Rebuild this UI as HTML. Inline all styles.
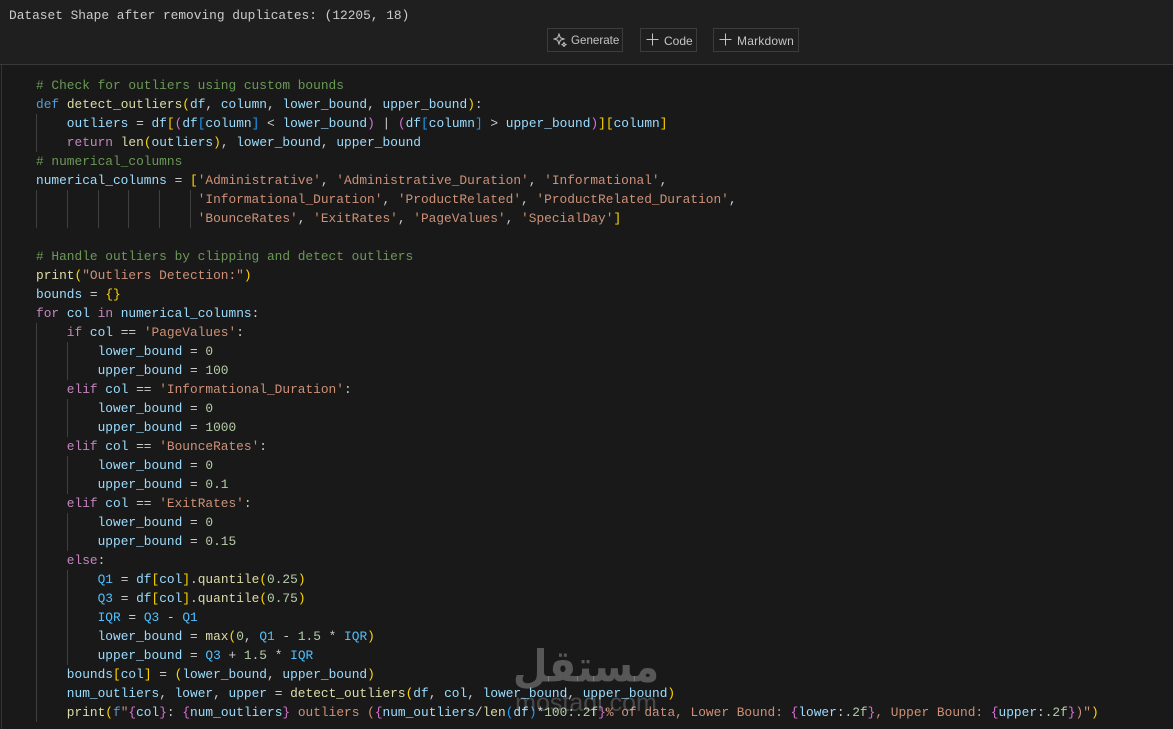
<!DOCTYPE html>
<html><head><meta charset="utf-8"><style>
html,body{margin:0;padding:0;background:#191919;width:1173px;height:729px;overflow:hidden}
#top{position:absolute;left:0;top:0;width:1173px;height:64px;background:#1f1f1f;border-bottom:1px solid #383838}
#lb{position:absolute;left:1px;top:65px;width:1px;height:664px;background:#333}
#out{position:absolute;left:9px;top:6px;font:12.83px/19px "Liberation Mono",monospace;color:#ccc;white-space:pre}
.btn{position:absolute;top:28px;height:22px;border:1px solid #3c3c3c;font:12px/24px "Liberation Sans",sans-serif;color:#c4c4c4;box-sizing:content-box}
.btn span{position:absolute;top:0;white-space:nowrap}
.btn svg{position:absolute;left:5px;top:4px}
pre{position:absolute;left:36px;top:76px;margin:0;font:12.83px/19px "Liberation Mono",monospace;color:#ccc}
.k{color:#569cd6}.c{color:#c586c0}.f{color:#dcdcaa}.v{color:#9cdcfe}.s{color:#ce9178}.n{color:#b5cea8}.m{color:#6a9955}.y{color:#ffd700}.p{color:#da70d6}.b{color:#179fff}.q{color:#4fc1ff}
.g{position:absolute;width:1px;background:#404040}
#wa{position:absolute;left:486px;top:642px;width:200px;text-align:center;font:bold 40px/50px "DejaVu Sans",sans-serif;color:rgba(255,255,255,.27);white-space:nowrap;transform:scaleY(1.1)}
#wb{position:absolute;left:486px;top:689px;width:200px;text-align:center;font:25px/28px "Liberation Sans",sans-serif;color:rgba(255,255,255,.2)}
</style></head><body>
<div id="top"></div><div id="lb"></div>
<div id="out">Dataset Shape after removing duplicates: (12205, 18)</div>
<div class="btn" style="left:547px;width:74px"><svg width="14" height="14" viewBox="0 0 14 14" fill="none" stroke="#c4c4c4" stroke-width="1"><path d="M6 1 L7.3 4.7 L11 6 L7.3 7.3 L6 11 L4.7 7.3 L1 6 L4.7 4.7 Z"/><path d="M11 9.5 L11.8 11 L13 11.6 L11.8 12.3 L11 13.5 L10.2 12.3 L9 11.6 L10.2 11 Z"/></svg><span style="left:23px;font-size:11.6px">Generate</span></div>
<div class="btn" style="left:640px;width:55px"><svg width="13" height="13" viewBox="0 0 13 13" stroke="#c4c4c4" stroke-width="1"><path d="M6.5 0.5V12.5M0.5 6.5H12.5"/></svg><span style="left:23px">Code</span></div>
<div class="btn" style="left:713px;width:84px"><svg width="13" height="13" viewBox="0 0 13 13" stroke="#c4c4c4" stroke-width="1"><path d="M6.5 0.5V12.5M0.5 6.5H12.5"/></svg><span style="left:23px;letter-spacing:.2px">Markdown</span></div>
<div class="g" style="left:36px;top:114px;height:38px"></div>
<div class="g" style="left:36px;top:190px;height:38px"></div><div class="g" style="left:67px;top:190px;height:38px"></div><div class="g" style="left:98px;top:190px;height:38px"></div><div class="g" style="left:128px;top:190px;height:38px"></div><div class="g" style="left:159px;top:190px;height:38px"></div><div class="g" style="left:190px;top:190px;height:38px"></div>
<div class="g" style="left:36px;top:323px;height:399px"></div>
<div class="g" style="left:67px;top:342px;height:38px"></div><div class="g" style="left:67px;top:399px;height:38px"></div><div class="g" style="left:67px;top:456px;height:38px"></div><div class="g" style="left:67px;top:513px;height:38px"></div><div class="g" style="left:67px;top:570px;height:95px"></div>
<pre><span class="m"># Check for outliers using custom bounds</span>
<span class="k">def</span> <span class="f">detect_outliers</span><span class="y">(</span><span class="v">df</span>, <span class="v">column</span>, <span class="v">lower_bound</span>, <span class="v">upper_bound</span><span class="y">)</span>:
    <span class="v">outliers</span> = <span class="v">df</span><span class="y">[</span><span class="p">(</span><span class="v">df</span><span class="b">[</span><span class="v">column</span><span class="b">]</span> &lt; <span class="v">lower_bound</span><span class="p">)</span> | <span class="p">(</span><span class="v">df</span><span class="b">[</span><span class="v">column</span><span class="b">]</span> &gt; <span class="v">upper_bound</span><span class="p">)</span><span class="y">]</span><span class="y">[</span><span class="v">column</span><span class="y">]</span>
    <span class="c">return</span> <span class="f">len</span><span class="y">(</span><span class="v">outliers</span><span class="y">)</span>, <span class="v">lower_bound</span>, <span class="v">upper_bound</span>
<span class="m"># numerical_columns</span>
<span class="v">numerical_columns</span> = <span class="y">[</span><span class="s">'Administrative'</span>, <span class="s">'Administrative_Duration'</span>, <span class="s">'Informational'</span>,
                     <span class="s">'Informational_Duration'</span>, <span class="s">'ProductRelated'</span>, <span class="s">'ProductRelated_Duration'</span>,
                     <span class="s">'BounceRates'</span>, <span class="s">'ExitRates'</span>, <span class="s">'PageValues'</span>, <span class="s">'SpecialDay'</span><span class="y">]</span>

<span class="m"># Handle outliers by clipping and detect outliers</span>
<span class="f">print</span><span class="y">(</span><span class="s">"Outliers Detection:"</span><span class="y">)</span>
<span class="v">bounds</span> = <span class="y">{}</span>
<span class="c">for</span> <span class="v">col</span> <span class="c">in</span> <span class="v">numerical_columns</span>:
    <span class="c">if</span> <span class="v">col</span> == <span class="s">'PageValues'</span>:
        <span class="v">lower_bound</span> = <span class="n">0</span>
        <span class="v">upper_bound</span> = <span class="n">100</span>
    <span class="c">elif</span> <span class="v">col</span> == <span class="s">'Informational_Duration'</span>:
        <span class="v">lower_bound</span> = <span class="n">0</span>
        <span class="v">upper_bound</span> = <span class="n">1000</span>
    <span class="c">elif</span> <span class="v">col</span> == <span class="s">'BounceRates'</span>:
        <span class="v">lower_bound</span> = <span class="n">0</span>
        <span class="v">upper_bound</span> = <span class="n">0.1</span>
    <span class="c">elif</span> <span class="v">col</span> == <span class="s">'ExitRates'</span>:
        <span class="v">lower_bound</span> = <span class="n">0</span>
        <span class="v">upper_bound</span> = <span class="n">0.15</span>
    <span class="c">else</span>:
        <span class="q">Q1</span> = <span class="v">df</span><span class="y">[</span><span class="v">col</span><span class="y">]</span>.<span class="f">quantile</span><span class="y">(</span><span class="n">0.25</span><span class="y">)</span>
        <span class="q">Q3</span> = <span class="v">df</span><span class="y">[</span><span class="v">col</span><span class="y">]</span>.<span class="f">quantile</span><span class="y">(</span><span class="n">0.75</span><span class="y">)</span>
        <span class="q">IQR</span> = <span class="q">Q3</span> - <span class="q">Q1</span>
        <span class="v">lower_bound</span> = <span class="f">max</span><span class="y">(</span><span class="n">0</span>, <span class="q">Q1</span> - <span class="n">1.5</span> * <span class="q">IQR</span><span class="y">)</span>
        <span class="v">upper_bound</span> = <span class="q">Q3</span> + <span class="n">1.5</span> * <span class="q">IQR</span>
    <span class="v">bounds</span><span class="y">[</span><span class="v">col</span><span class="y">]</span> = <span class="y">(</span><span class="v">lower_bound</span>, <span class="v">upper_bound</span><span class="y">)</span>
    <span class="v">num_outliers</span>, <span class="v">lower</span>, <span class="v">upper</span> = <span class="f">detect_outliers</span><span class="y">(</span><span class="v">df</span>, <span class="v">col</span>, <span class="v">lower_bound</span>, <span class="v">upper_bound</span><span class="y">)</span>
    <span class="f">print</span><span class="y">(</span><span class="k">f</span><span class="s">"</span><span class="p">{</span><span class="v">col</span><span class="p">}</span>: <span class="p">{</span><span class="v">num_outliers</span><span class="p">}</span><span class="s"> outliers (</span><span class="p">{</span><span class="v">num_outliers</span>/<span class="f">len</span><span class="b">(</span><span class="v">df</span><span class="b">)</span>*<span class="n">100</span>:<span class="n">.2f</span><span class="p">}</span><span class="s">% of data, Lower Bound: </span><span class="p">{</span><span class="v">lower</span>:<span class="n">.2f</span><span class="p">}</span><span class="s">, Upper Bound: </span><span class="p">{</span><span class="v">upper</span>:<span class="n">.2f</span><span class="p">}</span><span class="s">)"</span><span class="y">)</span></pre>
<div id="wa">مستقل</div>
<div id="wb">mostaql.com</div>
</body></html>
